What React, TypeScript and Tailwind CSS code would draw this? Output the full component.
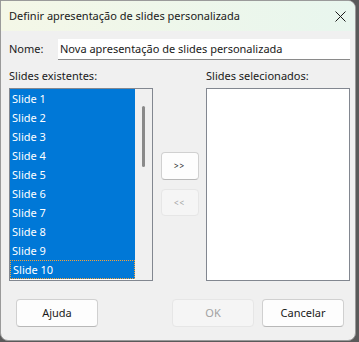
const slides = Array.from({ length: 10 }, (_, i) => `Slide ${i + 1}`)

function Btn({ children, disabled, className = "" }: { children: React.ReactNode; disabled?: boolean; className?: string }) {
    return (
        <button
            disabled={disabled}
            className={
                "flex items-center justify-center rounded-[4px] border " +
                (disabled
                    ? "bg-[#f5f5f5] border-[#e6e6e6] text-[#a2a2a2]"
                    : "bg-[#fdfdfd] border-[#d0d0d0] border-b-[#b8b8b8] text-[#1a1a1a]") +
                " " + className
            }
        >
            {children}
        </button>
    )
}

export default function App() {
    return (
        <div className="w-[359px] h-[342px] bg-[#5a5a5a] overflow-hidden" style={{ fontFamily: '"Noto Sans", "Open Sans", sans-serif' }}>
            <div className="w-[356px] h-[341px] bg-[#f0f0f0] border border-[#9a9a9a] rounded-tr-[8px] rounded-b-[8px] overflow-hidden flex flex-col">
                {/* title bar */}
                <div className="h-[30px] flex items-center justify-between pl-[8px] pr-[8px] bg-gradient-to-r from-[#f4f7e7] to-[#e8f6ee] text-[11px] text-[#1a1a1a]">
                    <span className="pt-[1px]">Definir apresentação de slides personalizada</span>
                    <svg width="11" height="11" viewBox="0 0 11 11" className="mr-[1px]">
                        <path d="M0.5 0.5 L10.5 10.5 M10.5 0.5 L0.5 10.5" stroke="#1a1a1a" strokeWidth="1" />
                    </svg>
                </div>

                <div className="flex flex-col pl-[8px] pr-[5px] text-[11px]">
                    <div className="mt-[8px] flex items-center text-[#1a1a1a]">
                        <span className="w-[49px]">Nome:</span>
                        <div className="flex-1 h-[21px] bg-white border-b border-[#8a8a8a] flex items-center pl-[2px]">
                            Nova apresentação de slides personalizada
                        </div>
                    </div>

                    <div className="mt-[8px] flex text-[#1a1a1a] leading-[16px]">
                        <span className="w-[197px]">Slides existentes:</span>
                        <span>Slides selecionados:</span>
                    </div>

                    <div className="mt-[4px] flex">
                        <div className="w-[144px] h-[193px] border border-[#828790] bg-white flex">
                            <div className="w-[125px] flex flex-col">
                                {slides.map((s, i) => (
                                    <div
                                        key={s}
                                        className={
                                            "h-[19px] bg-[#0078d7] text-white flex items-center pl-[2px] pt-[1px] " +
                                            (i === 9 ? "border border-dotted border-[#f5a33a]" : "")
                                        }
                                    >
                                        {s}
                                    </div>
                                ))}
                            </div>
                            <div className="flex-1 bg-[#f0f0f0] flex justify-center pt-[17px]">
                                <div className="w-[3px] h-[61px] rounded-full bg-[#8a8a8a]" />
                            </div>
                        </div>

                        <div className="w-[53px] flex flex-col items-center pt-[64px] gap-[9px]">
                            <Btn className="w-[38px] h-[28px] text-[8px] tracking-[1px]">&gt;&gt;</Btn>
                            <Btn disabled className="w-[38px] h-[27px] text-[8px] tracking-[1px]">&lt;&lt;</Btn>
                        </div>

                        <div className="w-[144px] h-[193px] border border-[#828790] bg-white" />
                    </div>

                    <div className="mt-[18px] flex">
                        <Btn className="ml-[7px] w-[82px] h-[28px] text-[11px]">Ajuda</Btn>
                        <Btn disabled className="ml-[74px] w-[82px] h-[28px] text-[11px]">OK</Btn>
                        <Btn className="ml-[8px] w-[82px] h-[28px] text-[11px]">Cancelar</Btn>
                    </div>
                </div>
            </div>
        </div>
    )
}
